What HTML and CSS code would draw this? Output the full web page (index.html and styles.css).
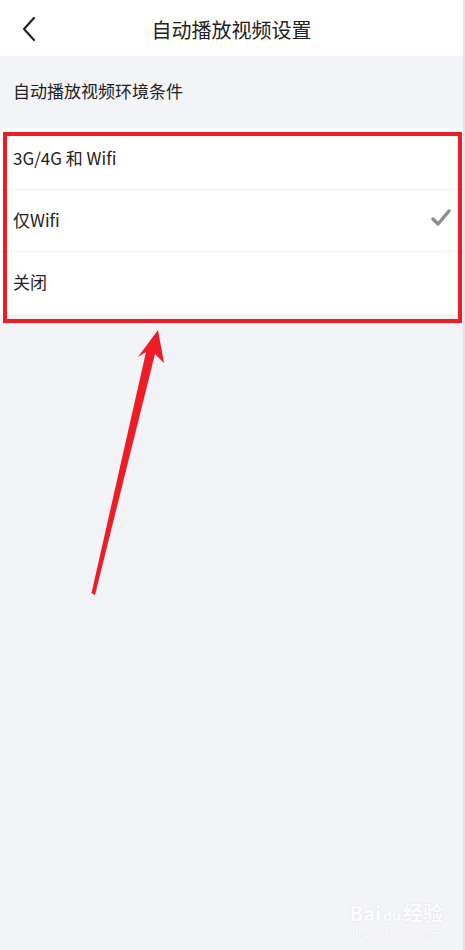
FILE: index.html
```html
<html>
<head>
    <meta charset="utf-8">
    <title>自动播放视频设置</title>
    <link rel="stylesheet" href="styles.css">
</head>
<body>
    <div class="page">
        <div class="header">
            <svg class="back" width="14" height="26" viewBox="0 0 14 26">
                <path d="M12 2 L2 13 L12 24" fill="none" stroke="#222" stroke-width="2.2" stroke-linecap="round" stroke-linejoin="round"/>
            </svg>
            <div class="title">自动播放视频设置</div>
        </div>
        <div class="section-label">自动播放视频环境条件</div>
        <div class="list">
            <div class="row">3G/4G 和 Wifi</div>
            <div class="row">
                <span>仅Wifi</span>
                <svg class="check" width="20" height="18" viewBox="0 0 20 18">
                    <path d="M2 10 L7 15 L18 2" fill="none" stroke="#8c8c8c" stroke-width="3.4" stroke-linecap="round" stroke-linejoin="round"/>
                </svg>
            </div>
            <div class="row">关闭</div>
        </div>

        <div class="mark-box"></div>
        <svg class="arrow" width="465" height="950" viewBox="0 0 465 950">
            <path d="M93 594 L91.5 593 L146 352 L138 357 L158 330 L164 363 L155 354 L95 595 Z" fill="#ee1c25"/>
        </svg>

        <div class="watermark">
            <div class="wm-logo">Bai<span class="paw">du</span>经验</div>
            <div class="wm-url">jingyan.baidu.com</div>
        </div>
    </div>
</body>
</html>
```

FILE: styles.css
```css
body {
    margin: 0;
    padding: 0;
    background: #f3f4f8;
    font-family: "Noto Sans CJK SC", "Liberation Sans", sans-serif;
    color: #222;
}
.page {
    position: relative;
    width: 465px;
    height: 950px;
    overflow: hidden;
    border-right: 2px solid #e2e3e6;
    box-sizing: border-box;
}
.header {
    height: 56px;
    background: #fff;
    display: flex;
    align-items: center;
    justify-content: center;
    position: relative;
}
.back {
    position: absolute;
    left: 22px;
    top: 16px;
}
.title {
    font-size: 20px;
    color: #222;
    margin-top: 3px;
}
.section-label {
    height: 72px;
    box-sizing: border-box;
    padding: 0 0 4px 13px;
    display: flex;
    align-items: center;
    font-size: 17px;
    color: #222;
}
.list {
    background: #fff;
}
.row {
    height: 62px;
    box-sizing: border-box;
    display: flex;
    align-items: center;
    justify-content: space-between;
    padding: 0 13px 3px 13px;
    font-size: 17px;
    border-bottom: 1px solid #eef0f4;
}
.row:last-child {
    border-bottom: none;
}
.check {
    margin-right: -1px;
    margin-top: -2px;
}
.mark-box {
    position: absolute;
    left: 3px;
    top: 132px;
    width: 451px;
    height: 183px;
    border: 4px solid #ee1c25;
}
.arrow {
    position: absolute;
    left: 0;
    top: 0;
}
.watermark {
    position: absolute;
    right: 20px;
    bottom: 8px;
    color: #fff;
    text-align: center;
    opacity: 0.9;
}
.wm-logo {
    font-size: 20px;
    font-weight: bold;
    text-shadow: 0 0 2px #d8dae0;
}
.paw {
    font-size: 14px;
    margin: 0 2px;
}
.wm-url {
    font-family: "Liberation Serif", serif;
    font-size: 12px;
    text-shadow: 0 0 2px #d8dae0;
}
```
